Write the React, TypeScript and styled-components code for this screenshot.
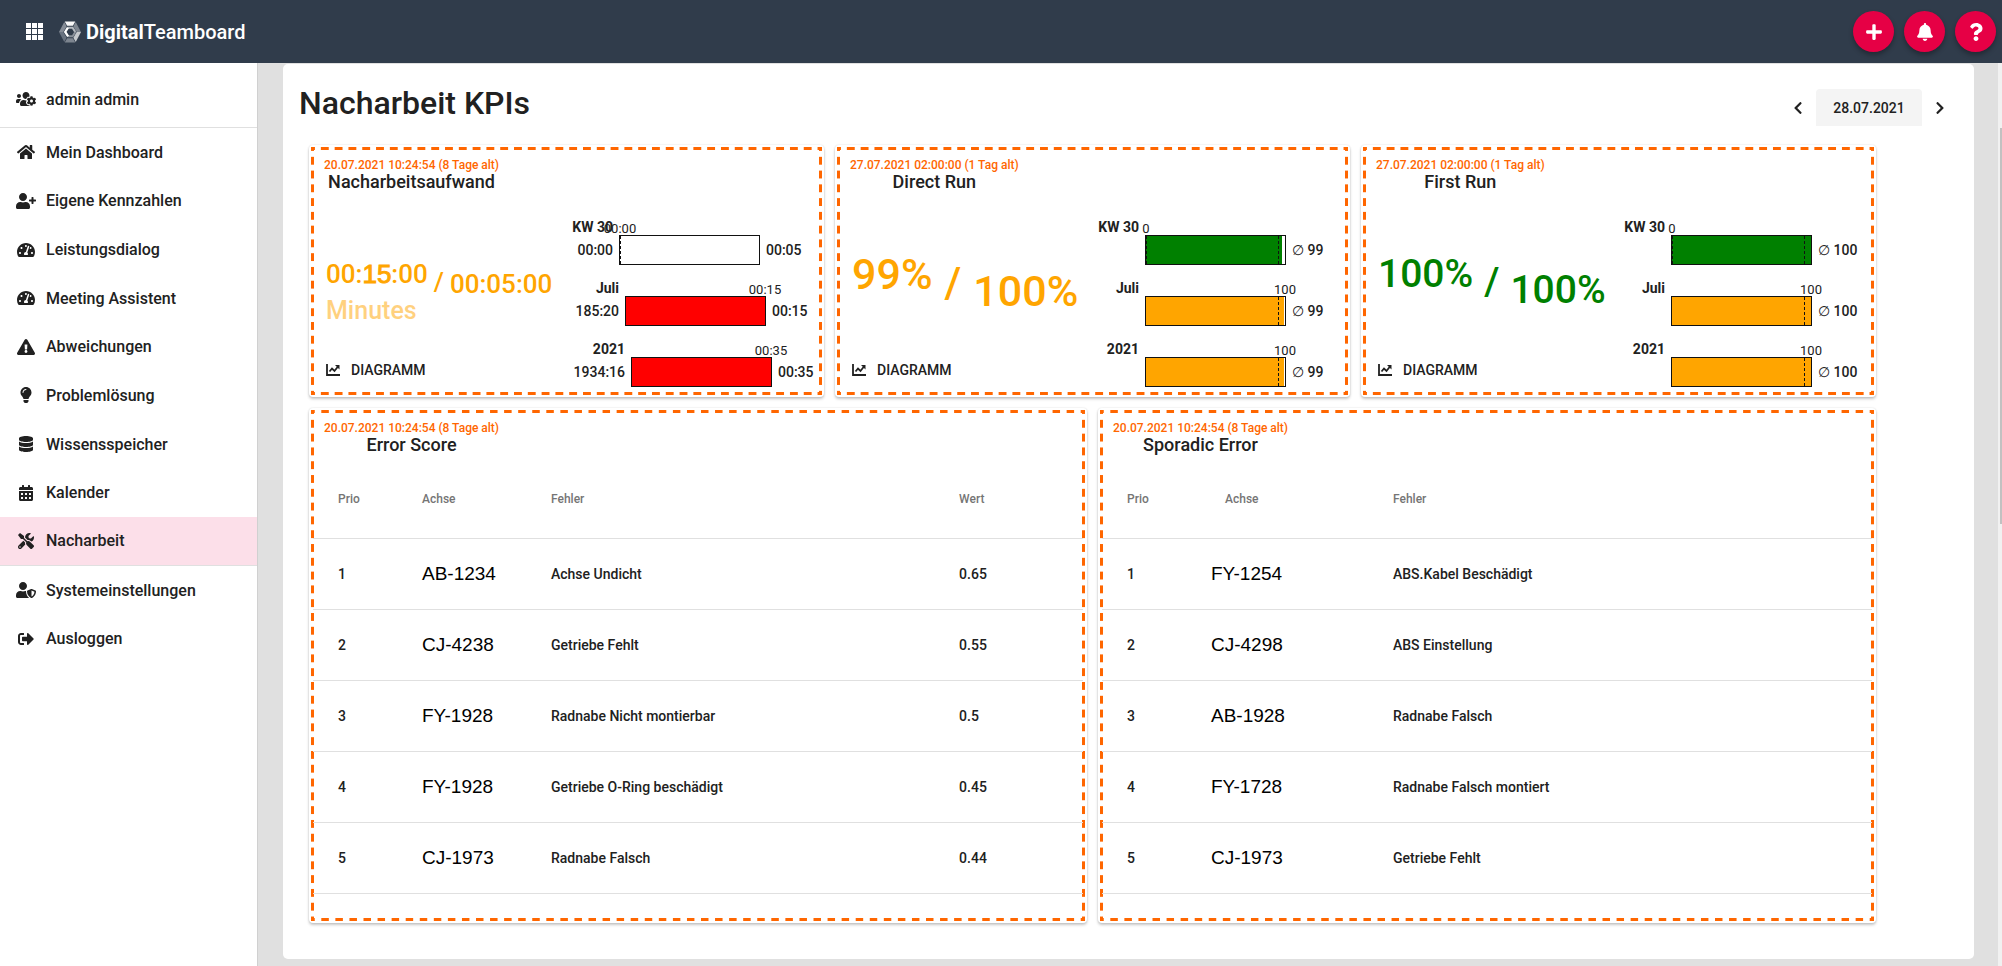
import React from "react";
import styled, { createGlobalStyle, css } from "styled-components";
import {
  FaUsersCog,
  FaHome,
  FaUserPlus,
  FaTachometerAlt,
  FaExclamationTriangle,
  FaLightbulb,
  FaDatabase,
  FaCalendarAlt,
  FaTools,
  FaUserShield,
  FaSignOutAlt,
  FaPlus,
  FaBell,
  FaQuestion,
  FaChevronLeft,
  FaChevronRight,
} from "react-icons/fa";

const GlobalStyle = createGlobalStyle`
  * { box-sizing: border-box; }
  body {
    margin: 0;
    background: #e0e0e0;
    color: #212121;
    font-family: Roboto, "Liberation Sans", sans-serif;
    font-weight: 500;
  }
  button { font: inherit; color: inherit; border: 0; padding: 0; background: none; cursor: pointer; }
`;

const Page = styled.div`
  display: flex;
  flex-direction: column;
  min-height: 100vh;
`;

const TopBar = styled.header`
  display: flex;
  align-items: center;
  height: 63px;
  padding: 0 6px 0 26px;
  background: #303c4b;
  color: #fff;
`;

const AppsButton = styled.button`
  display: flex;
  margin-right: 16px;
`;

const Brand = styled.a`
  display: flex;
  align-items: center;
  gap: 5px;
  color: inherit;
  text-decoration: none;
  font-size: 20px;
  line-height: 24px;
  font-weight: 500;
  strong { font-weight: 700; }
`;

const RoundActions = styled.div`
  display: flex;
  gap: 10px;
  margin-left: auto;
`;

const RoundButton = styled.button`
  display: flex;
  align-items: center;
  justify-content: center;
  width: 41px;
  height: 41px;
  border-radius: 50%;
  background: #e60045;
  color: #fff;
  font-size: 18px;
  box-shadow: 0 3px 5px rgba(0, 0, 0, 0.3);
`;

const Body = styled.div`
  display: flex;
  flex: 1;
`;

const ScrollStrip = styled.div`
  flex: none;
  width: 4px;
  padding: 65px 0 0 2px;
  background: #f1f1f1;
`;

const ScrollThumb = styled.div`
  height: 396px;
  background: #c1c1c1;
`;

const Sidebar = styled.aside`
  flex: none;
  width: 258px;
  background: #fff;
  border-right: 1px solid #d0d0d0;
`;

const UserRow = styled.div`
  display: flex;
  align-items: center;
  height: 65px;
  padding: 8px 16px 0;
  border-bottom: 1px solid #e0e0e0;
  font-size: 16px;
`;

const NavList = styled.ul`
  display: grid;
  grid-auto-rows: 1fr;
  height: 535px;
  margin: 0;
  padding: 0;
  list-style: none;
`;

const NavLink = styled.a<{ $active?: boolean }>`
  display: flex;
  align-items: center;
  height: 100%;
  padding: 0 16px;
  color: inherit;
  text-decoration: none;
  font-size: 16px;
  ${(p) => p.$active && css`
    background: #fcdfe9;
    border-bottom: 1px solid #e0e0e0;
  `}
`;

const NavIcon = styled.span`
  display: flex;
  margin-right: 10px;
  svg {
    width: 20px;
    height: 16px;
  }
`;

const Main = styled.main`
  flex: 1;
  min-width: 0;
  margin: 1px 24px 7px 25px;
  padding: 0 26px 36px;
  background: #fff;
  border-radius: 5px;
`;

const MainHead = styled.div`
  display: flex;
  justify-content: space-between;
  align-items: flex-start;
  height: 81px;
  margin: 0 -10px;
`;

const PageTitle = styled.h1`
  margin: 0;
  padding-top: 19px;
  font-size: 32px;
  line-height: 40px;
  font-weight: 500;
`;

const DateNav = styled.div`
  display: flex;
  align-items: center;
  padding-top: 25px;
`;

const DateStep = styled.button`
  display: flex;
  align-items: center;
  justify-content: center;
  width: 36px;
  height: 37px;
  font-size: 14px;
`;

const DateButton = styled.button`
  width: 106px;
  height: 37px;
  border-radius: 4px 4px 0 0;
  background: #f4f4f4;
  font-size: 14px;
`;

const Cards = styled.div`
  display: grid;
  grid-template-columns: repeat(6, 1fr);
  gap: 11px;
  margin-right: 72px;
`;

const Card = styled.section<{ $span: number }>`
  grid-column: span ${(p) => p.$span};
  padding: 2px;
  border-radius: 4px;
  background: #fff;
  box-shadow: 0 2px 3px rgba(0, 0, 0, 0.22), 0 0 2px rgba(0, 0, 0, 0.12);
`;

const dashX = "linear-gradient(90deg, #ff6600 0 4px, transparent 4px 10px, #ff6600 10px)";
const dashY = "linear-gradient(#ff6600 0 4px, transparent 4px 10px, #ff6600 10px)";

const Dashed = styled.div<{ $tall?: boolean }>`
  display: flex;
  flex-direction: column;
  height: 100%;
  min-height: ${(p) => (p.$tall ? 511 : 248)}px;
  padding: 2px;
  background:
    ${dashX} left top / 14px 3px round no-repeat,
    ${dashX} left bottom / 14px 3px round no-repeat,
    ${dashY} left top / 3px 14px no-repeat round,
    ${dashY} right top / 3px 14px no-repeat round;
`;

const CardHead = styled.header`
  align-self: flex-start;
  padding: 9px 11px 0;
  text-align: center;
`;

const Stamp = styled.div`
  font-size: 12px;
  line-height: 14px;
  color: #ff6600;
`;

const CardTitle = styled.h2`
  margin: 0;
  font-size: 18px;
  line-height: 20px;
  font-weight: 500;
`;

const KpiBody = styled.div`
  display: flex;
  flex: 1;
  justify-content: space-between;
  padding-left: 10px;
`;

const KpiLeft = styled.div`
  display: flex;
  flex-direction: column;
  justify-content: space-between;
  padding-bottom: 14px;
`;

const Figures = styled.div<{ $color: string; $size: number; $gap: number }>`
  display: flex;
  align-items: flex-start;
  gap: ${(p) => p.$gap}px;
  padding: 60px 3px 0;
  color: ${(p) => p.$color};
  font-size: ${(p) => p.$size}px;
  line-height: 44px;
`;

const Actual = styled.div`
  display: flex;
  flex-direction: column;
`;

const Slash = styled.span`
  padding-top: 8px;
`;

const Target = styled.span<{ $drop: number }>`
  padding-top: ${(p) => p.$drop}px;
`;

const Patched = styled.span`
  font-family: "Liberation Sans", Arial, sans-serif;
  -webkit-text-stroke: 1px currentColor;
`;

const Unit = styled.span`
  font-size: 25px;
  line-height: 30px;
  opacity: 0.5;
`;

const DiagramButton = styled.button`
  display: flex;
  align-items: center;
  align-self: flex-start;
  gap: 11px;
  padding-left: 3px;
  font-size: 14px;
  line-height: 18px;
`;

const Bars = styled.div`
  display: flex;
  flex-direction: column;
  gap: 15px;
  width: 248px;
  padding-top: 27px;
`;

const BarRow = styled.div<{ $label: number }>`
  display: grid;
  grid-template-columns: ${(p) => p.$label}px 141px 1fr;
  column-gap: 6px;
  font-size: 14px;
`;

const BarLabel = styled.div`
  line-height: 16px;
  text-align: right;
  white-space: nowrap;
  font-weight: 700;
`;

const BarValue = styled.div`
  line-height: 30px;
  text-align: right;
`;

const BarEnd = styled.div`
  line-height: 30px;
  white-space: nowrap;
`;

const Track = styled.div`
  position: relative;
  grid-column: 2;
  height: 30px;
  border: 1px solid #111;
`;

const Fill = styled.div`
  height: 100%;
`;

const Tick = styled.span`
  position: absolute;
  top: 0;
  bottom: 0;
  border-left: 1px dashed #111;
`;

const TickLabel = styled.span`
  position: absolute;
  bottom: 28px;
  transform: translateX(-50%);
  font-size: 13px;
  line-height: 14px;
  font-weight: 400;
`;

const Table = styled.table`
  width: 100%;
  margin-top: 11px;
  border-collapse: collapse;
  table-layout: fixed;
  text-align: left;
`;

const Col = styled.col<{ $w?: string }>`
  width: ${(p) => p.$w ?? "auto"};
`;

const Th = styled.th<{ $indent?: boolean }>`
  height: 72px;
  padding: 0 0 6px ${(p) => (p.$indent ? 39 : 25)}px;
  border-bottom: 1px solid #e0e0e0;
  color: #757575;
  font-size: 12px;
  font-weight: 500;
`;

const Td = styled.td<{ $code?: boolean }>`
  height: 71px;
  padding: 0 0 0 25px;
  border-bottom: 1px solid #e0e0e0;
  font-size: 14px;
  ${(p) => p.$code && css`
    color: #000;
    font-family: "Liberation Sans", Arial, sans-serif;
    font-size: 19px;
    font-weight: 400;
  `}
`;

const NAV = [
  { icon: FaHome, text: "Mein Dashboard" },
  { icon: FaUserPlus, text: "Eigene Kennzahlen" },
  { icon: FaTachometerAlt, text: "Leistungsdialog" },
  { icon: FaTachometerAlt, text: "Meeting Assistent" },
  { icon: FaExclamationTriangle, text: "Abweichungen" },
  { icon: FaLightbulb, text: "Problemlösung" },
  { icon: FaDatabase, text: "Wissensspeicher" },
  { icon: FaCalendarAlt, text: "Kalender" },
  { icon: FaTools, text: "Nacharbeit" },
  { icon: FaUserShield, text: "Systemeinstellungen" },
  { icon: FaSignOutAlt, text: "Ausloggen" },
];

type Bar = {
  label: string;
  value?: string;
  end: string;
  mark: string;
  at: number;
  fill: number;
  color: string;
  limit?: number;
  width?: number;
};

const REWORK: Bar[] = [
  { label: "KW 30", value: "00:00", end: "00:05", mark: "00:00", at: 0, fill: 0, color: "red" },
  { label: "Juli", value: "185:20", end: "00:15", mark: "00:15", at: 100, fill: 100, color: "red", width: 47 },
  { label: "2021", value: "1934:16", end: "00:35", mark: "00:35", at: 100, fill: 100, color: "red", width: 53 },
];

const DIRECT: Bar[] = [
  { label: "KW 30", end: "∅ 99", mark: "0", at: 0, fill: 98, color: "green", limit: 95 },
  { label: "Juli", end: "∅ 99", mark: "100", at: 100, fill: 99, color: "orange", limit: 95 },
  { label: "2021", end: "∅ 99", mark: "100", at: 100, fill: 99, color: "orange", limit: 95 },
];

const FIRST: Bar[] = [
  { label: "KW 30", end: "∅ 100", mark: "0", at: 0, fill: 100, color: "green", limit: 95 },
  { label: "Juli", end: "∅ 100", mark: "100", at: 100, fill: 100, color: "orange", limit: 95 },
  { label: "2021", end: "∅ 100", mark: "100", at: 100, fill: 100, color: "orange", limit: 95 },
];

const ERRORS = [
  ["1", "AB-1234", "Achse Undicht", "0.65"],
  ["2", "CJ-4238", "Getriebe Fehlt", "0.55"],
  ["3", "FY-1928", "Radnabe Nicht montierbar", "0.5"],
  ["4", "FY-1928", "Getriebe O-Ring beschädigt", "0.45"],
  ["5", "CJ-1973", "Radnabe Falsch", "0.44"],
];

const SPORADIC = [
  ["1", "FY-1254", "ABS.Kabel Beschädigt"],
  ["2", "CJ-4298", "ABS Einstellung"],
  ["3", "AB-1928", "Radnabe Falsch"],
  ["4", "FY-1728", "Radnabe Falsch montiert"],
  ["5", "CJ-1973", "Getriebe Fehlt"],
];

function AppsIcon() {
  return (
    <svg width="17" height="17" viewBox="0 0 17 17" fill="#fff" aria-hidden="true">
      {[0, 6, 12].map((y) => [0, 6, 12].map((x) => <rect key={`${x}-${y}`} x={x} y={y} width="5" height="5" />))}
    </svg>
  );
}

function LogoIcon() {
  return (
    <svg width="22" height="22" viewBox="0 0 23 22" aria-hidden="true">
      <path d="M6 0h11l-2.500 4.500h-6z" fill="#f8f8f8" />
      <path d="M17.500 .5L23 11h-4.500l-3.500-6z" fill="#7d858f" />
      <path d="M23 11l-5.500 10.500-2.500-4.500 3.500-6z" fill="#c5c9cd" />
      <path d="M17 22H6l2.500-4.500h6z" fill="#7d858f" />
      <path d="M5.500 21.500L0 11h4.500l3.500 6z" fill="#697380" />
      <path d="M0 11L5.500 .5l2.500 4.500-3.500 6z" fill="#858c96" />
      <path d="M8.800 6.500h5.400L17 11" fill="none" stroke="#b4b9bf" strokeWidth="2.200" />
      <path d="M17 11l-2.800 4.500H8.800" fill="none" stroke="#8b929b" strokeWidth="2" />
      <path d="M9.500 15.500L6.500 11l2.800-4.500" fill="none" stroke="#fff" strokeWidth="2.400" />
    </svg>
  );
}

function ChartIcon() {
  return (
    <svg width="14" height="12" viewBox="0 0 14 12" fill="none" stroke="#212121" aria-hidden="true">
      <path d="M1 0v11h13" strokeWidth="1.800" />
      <path d="M3.500 7.500l2.500-3 2.500 2.500 3.500-4.500" strokeWidth="1.800" />
      <path d="M9 1h4.500v4.500z" fill="#212121" stroke="none" />
    </svg>
  );
}

function BarChart({ bars }: { bars: Bar[] }) {
  return (
    <Bars>
      {bars.map((b) => (
        <BarRow key={b.label} $label={b.width ?? 41}>
          <BarLabel>{b.label}</BarLabel>
          <span />
          <span />
          <BarValue>{b.value}</BarValue>
          <Track>
            <Fill style={{ width: `${b.fill}%`, background: b.color }} />
            {b.limit && <Tick style={{ left: `${b.limit}%` }} />}
            <Tick style={{ left: `${b.at}%` }} />
            <TickLabel style={{ left: `${b.at}%` }}>{b.mark}</TickLabel>
          </Track>
          <BarEnd>{b.end}</BarEnd>
        </BarRow>
      ))}
    </Bars>
  );
}

type KpiProps = {
  stamp: string;
  title: string;
  color: string;
  size: number;
  gap: number;
  drop: number;
  actual: React.ReactNode;
  target: string;
  unit?: string;
  bars: Bar[];
};

function KpiCard(p: KpiProps) {
  return (
    <Card $span={2}>
      <Dashed>
        <CardHead>
          <Stamp>{p.stamp}</Stamp>
          <CardTitle>{p.title}</CardTitle>
        </CardHead>
        <KpiBody>
          <KpiLeft>
            <Figures $color={p.color} $size={p.size} $gap={p.gap}>
              <Actual>
                <span>{p.actual}</span>
                {p.unit && <Unit>{p.unit}</Unit>}
              </Actual>
              <Slash>/</Slash>
              <Target $drop={p.drop}>{p.target}</Target>
            </Figures>
            <DiagramButton type="button">
              <ChartIcon />
              DIAGRAMM
            </DiagramButton>
          </KpiLeft>
          <BarChart bars={p.bars} />
        </KpiBody>
      </Dashed>
    </Card>
  );
}

type TableProps = {
  title: string;
  heads: string[];
  widths: (string | undefined)[];
  rows: string[][];
  indent?: boolean;
};

function TableCard({ title, heads, widths, rows, indent }: TableProps) {
  return (
    <Card $span={3}>
      <Dashed $tall>
        <CardHead>
          <Stamp>20.07.2021 10:24:54 (8 Tage alt)</Stamp>
          <CardTitle>{title}</CardTitle>
        </CardHead>
        <Table>
          <colgroup>
            {widths.map((w, i) => (
              <Col key={i} $w={w} />
            ))}
          </colgroup>
          <thead>
            <tr>
              {heads.map((h, i) => (
                <Th key={h} $indent={indent && i === 1}>{h}</Th>
              ))}
            </tr>
          </thead>
          <tbody>
            {rows.map((row) => (
              <tr key={row[0]}>
                {row.map((cell, i) => (
                  <Td key={i} $code={i === 1}>{cell}</Td>
                ))}
              </tr>
            ))}
          </tbody>
        </Table>
      </Dashed>
    </Card>
  );
}

export default function App() {
  return (
    <Page>
      <GlobalStyle />
      <TopBar>
        <AppsButton type="button" aria-label="Apps"><AppsIcon /></AppsButton>
        <Brand href="#">
          <LogoIcon />
          <span><strong>Digital</strong>Teamboard</span>
        </Brand>
        <RoundActions>
          <RoundButton type="button" aria-label="Neu"><FaPlus /></RoundButton>
          <RoundButton type="button" aria-label="Meldungen"><FaBell /></RoundButton>
          <RoundButton type="button" aria-label="Hilfe"><FaQuestion /></RoundButton>
        </RoundActions>
      </TopBar>
      <Body>
        <Sidebar>
          <UserRow>
            <NavIcon><FaUsersCog /></NavIcon>
            admin admin
          </UserRow>
          <nav>
            <NavList>
              {NAV.map(({ icon: Icon, text }) => (
                <li key={text}>
                  <NavLink href="#" $active={text === "Nacharbeit"}>
                    <NavIcon><Icon /></NavIcon>
                    {text}
                  </NavLink>
                </li>
              ))}
            </NavList>
          </nav>
        </Sidebar>
        <Main>
          <MainHead>
            <PageTitle>Nacharbeit KPIs</PageTitle>
            <DateNav>
              <DateStep type="button" aria-label="Vorheriger Tag"><FaChevronLeft /></DateStep>
              <DateButton type="button">28.07.2021</DateButton>
              <DateStep type="button" aria-label="Nächster Tag"><FaChevronRight /></DateStep>
            </DateNav>
          </MainHead>
          <Cards>
            <KpiCard
              stamp="20.07.2021 10:24:54 (8 Tage alt)"
              title="Nacharbeitsaufwand"
              color="orange"
              size={26}
              gap={6}
              drop={10}
              actual={<>00:<Patched>15</Patched>:00</>}
              target="00:05:00"
              unit="Minutes"
              bars={REWORK}
            />
            <KpiCard
              stamp="27.07.2021 02:00:00 (1 Tag alt)"
              title="Direct Run"
              color="orange"
              size={43}
              gap={12}
              drop={17}
              actual="99%"
              target="100%"
              bars={DIRECT}
            />
            <KpiCard
              stamp="27.07.2021 02:00:00 (1 Tag alt)"
              title="First Run"
              color="green"
              size={39}
              gap={11}
              drop={16}
              actual="100%"
              target="100%"
              bars={FIRST}
            />
            <TableCard
              title="Error Score"
              heads={["Prio", "Achse", "Fehler", "Wert"]}
              widths={["84px", "129px", "53%", undefined]}
              rows={ERRORS}
            />
            <TableCard
              title="Sporadic Error"
              heads={["Prio", "Achse", "Fehler"]}
              widths={["84px", "182px", undefined]}
              rows={SPORADIC}
              indent
            />
          </Cards>
        </Main>
        <ScrollStrip>
          <ScrollThumb />
        </ScrollStrip>
      </Body>
    </Page>
  );
}
